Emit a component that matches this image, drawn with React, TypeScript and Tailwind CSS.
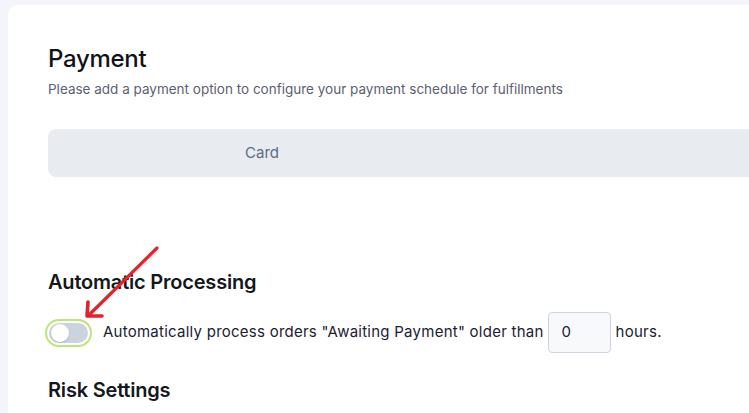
// Payment settings panel: tab bar, auto-processing toggle with callout arrow.
const FONT = { fontFamily: '"Inter", "Noto Sans", sans-serif' };

function Toggle() {
  return (
    <div className="flex h-[28px] w-[47px] shrink-0 items-center rounded-full border-2 border-[#bde57a] p-[2px]">
      <div className="flex h-full w-full items-center rounded-full bg-[#cbd3df] px-[2px]">
        <div className="h-[18px] w-[18px] rounded-full bg-white shadow-sm" />
      </div>
    </div>
  );
}

export default function App() {
  return (
    <div className="h-[413px] w-[749px] overflow-hidden bg-[#f4f5fa] pl-[8px] pt-[5px]" style={FONT}>
      <div className="relative h-full rounded-tl-[10px] bg-white pl-[40px] pt-[38px]">
        <h1 className="text-[24px] font-medium leading-[32px] tracking-[-0.3px] text-[#111318]">Payment</h1>
        <p className="mt-[5px] text-[13.5px] leading-[18px] tracking-[0px] text-[#5b6170]">
          Please add a payment option to configure your payment schedule for fulfillments
        </p>

        <div className="mt-[31px] flex h-[48px] rounded-l-[8px] bg-[#e8ebef]">
          <div className="flex w-[428px] items-center justify-center text-[15px] text-[#5b6b87]">Card</div>
        </div>

        <h2 className="mt-[91px] text-[20px] font-semibold leading-[28px] tracking-[-0.2px] text-[#15171c]">
          Automatic Processing
        </h2>
        <div className="mt-[16px] ml-[-3px] flex items-center text-[15px] tracking-[0.25px] text-[#1c2130]">
          <Toggle />
          <span className="ml-[11px]">Automatically process orders "Awaiting Payment" older than</span>
          <div className="ml-[4px] flex h-[41px] w-[63px] items-center rounded-[4px] border border-[#cdd5e2] bg-[#f8f9fb] pl-[13px]">
            0
          </div>
          <span className="ml-[5px]">hours.</span>
        </div>

        <h2 className="mt-[23px] text-[20px] font-semibold leading-[28px] tracking-[-0.2px] text-[#15171c]">
          Risk Settings
        </h2>

        {/* callout arrow pointing at the toggle */}
        <svg className="pointer-events-none absolute left-[-8px] top-[-5px]" width="749" height="413" viewBox="0 0 749 413">
          <line x1="157" y1="248" x2="90" y2="314" stroke="#e8202a" strokeWidth="3.2" strokeLinecap="round" />
          <polyline points="88,302 87,316 102,316" fill="none" stroke="#e8202a" strokeWidth="3.6" strokeLinecap="round" strokeLinejoin="round" />
        </svg>
      </div>
    </div>
  );
}
